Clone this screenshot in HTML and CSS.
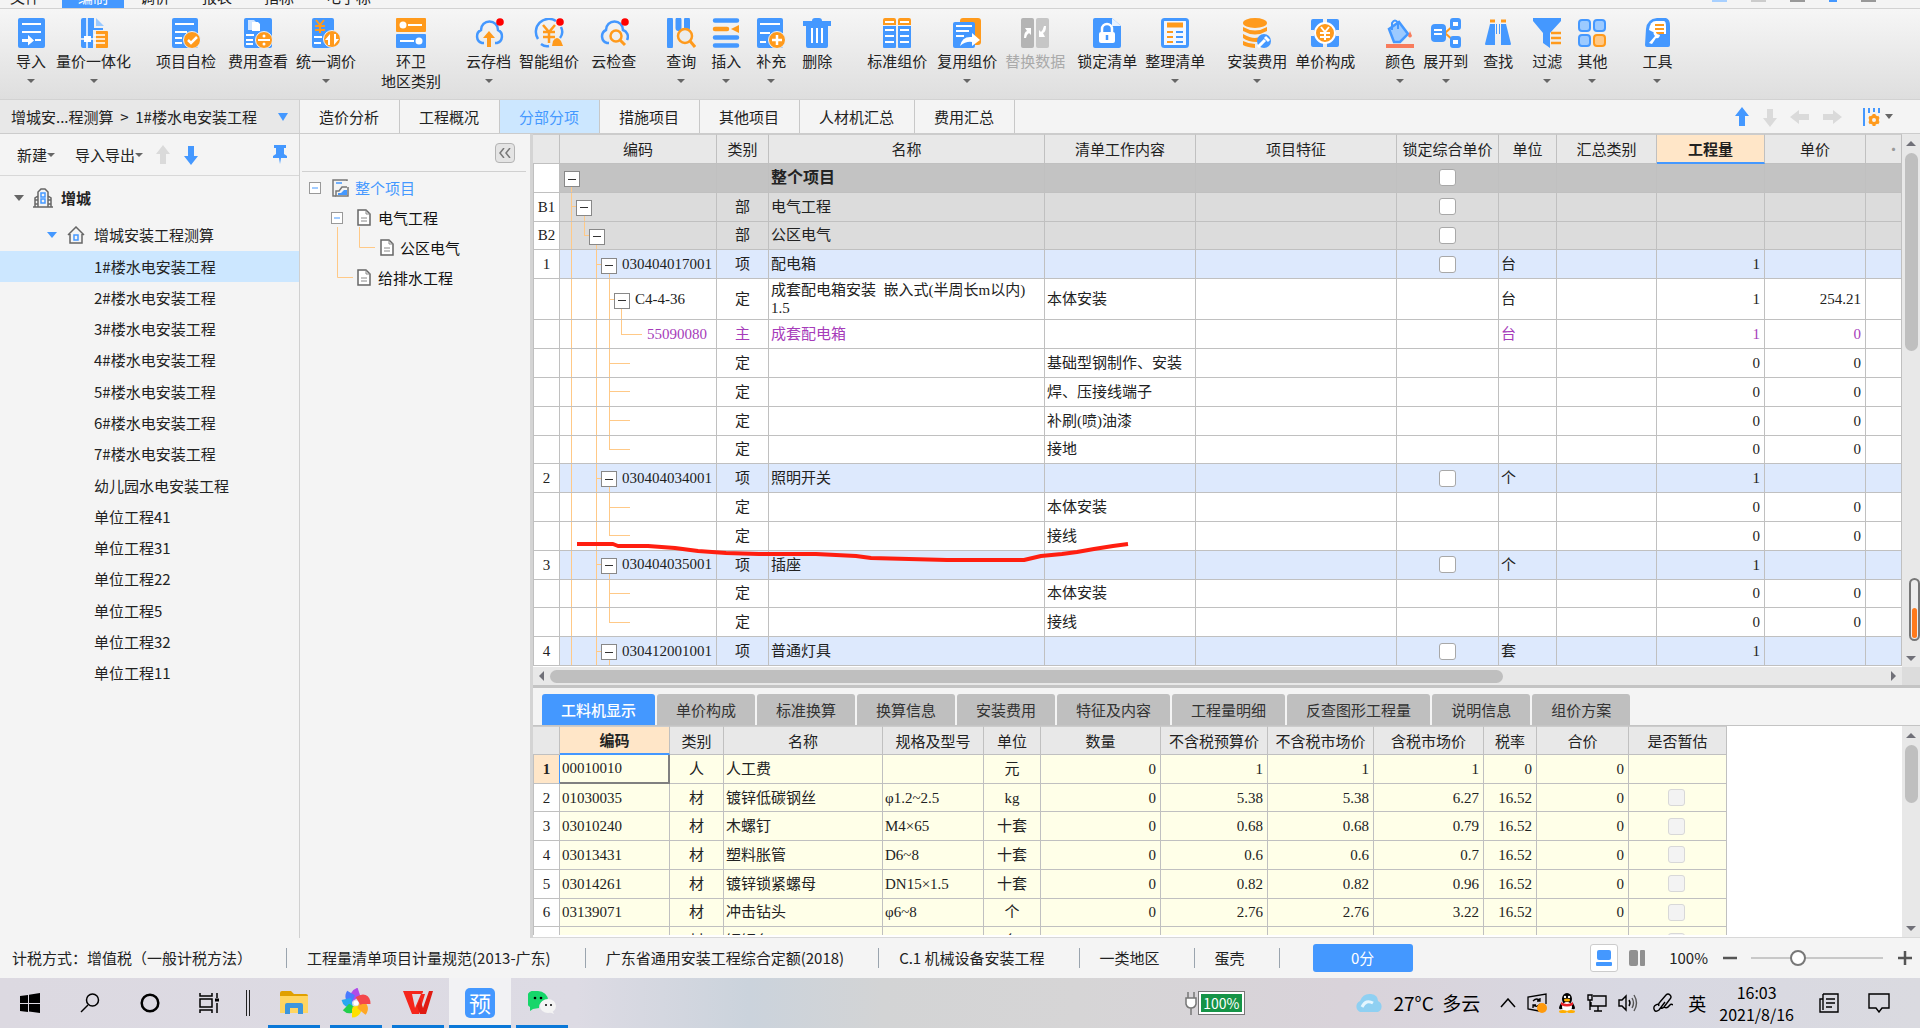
FILE: index.html
```html
<!DOCTYPE html>
<html lang="zh-CN">
<head>
<meta charset="utf-8">
<title>增城安装工程测算</title>
<link rel="stylesheet" href="styles.css">
</head>
<body>
<nav class="menu">
  <a href="#" class="first">文件</a><a href="#" class="active">编制</a><a href="#">调价</a><a href="#">报表</a><a href="#">指标</a><a href="#">电子标</a>
  <span class="menu-right"><i class="c1"></i><i class="c2"></i><i class="c3"></i><i class="c4"></i><i class="c3"></i></span>
</nav>

<div class="toolbar">
  <button class="tool s16"><svg viewBox="0 0 30 30"><rect x="2" width="27" height="30" rx="2" fill="#4498ff"/><path d="M6 6h19M6 14h19M19 22h6" stroke="#fff" stroke-width="2"/><path d="M6 21h6v-4l6 5.500-6 5v-3.500H6z" fill="#fff"/></svg><span>导入</span><b class="caret"></b></button>
  <button class="tool s10"><svg viewBox="0 0 30 30"><path d="M2 2q0-2 2-2h11v10h9v2H14v18H4q-2 0-2-2z" fill="#4498ff"/><path d="M17 0l8 8h-8z" fill="#9ccaff"/><path d="M8 0v30M2 21h13" stroke="#fff" stroke-width="1.500"/><rect x="5" y="18" width="7" height="6" fill="#fff"/><path d="M17 13h11q1 0 1 1v15q0 1-1 1H17z" fill="#ff9a1c"/><path d="M15 17h11M15 21h11M15 25h11" stroke="#fff" stroke-width="1.500"/></svg><span>量价一体化</span><b class="caret"></b></button>
  <button class="tool s25"><svg viewBox="0 0 30 30"><rect x="1" width="26" height="30" rx="2" fill="#4498ff"/><path d="M4 6h19M4 14h12M4 20h7M4 25h7" stroke="#fff" stroke-width="2"/><circle cx="21" cy="22" r="8.500" fill="#ff9a1c" stroke="#e8f2ff"/><path d="M17 22l3 3 6-6" stroke="#fff" stroke-width="2.500" fill="none"/></svg><span>项目自检</span></button>
  <button class="tool s12"><svg viewBox="0 0 30 30"><rect x="1" width="28" height="30" rx="2" fill="#4498ff"/><path d="M5 2h6l2 2v8H5z" fill="#cfe4ff"/><path d="M9 4h6l2 2v7H9z" fill="#fff"/><path d="M3 17h8M3 22h7M3 26h7" stroke="#fff" stroke-width="2"/><circle cx="21" cy="22" r="8.500" fill="#ff9a1c" stroke="#e8f2ff"/><path d="M15 22h12" stroke="#fff" stroke-width="2"/><circle cx="21" cy="18" r="1.500" fill="#fff"/><circle cx="21" cy="26" r="1.500" fill="#fff"/></svg><span>费用查看</span></button>
  <button class="tool s8"><svg viewBox="0 0 30 30"><rect x="1" width="22" height="30" rx="2" fill="#4498ff"/><path d="M5 2l4 5 4-5M9 7v8M4 8h10M4 12h10" stroke="#ff9a1c" stroke-width="2" fill="none"/><path d="M3 19h8M3 25h7" stroke="#fff" stroke-width="2"/><circle cx="21" cy="21" r="8.500" fill="#ff9a1c" stroke="#e8f2ff"/><path d="M19 27V16l-5 6h3v5zM23 16v11l5-6h-3v-5z" fill="#fff"/></svg><span>统一调价</span><b class="caret"></b></button>
  <button class="tool s25"><svg viewBox="0 0 30 30"><rect width="30" height="14" rx="1" fill="#ff9a1c"/><rect y="16" width="30" height="14" rx="1" fill="#4498ff"/><circle cx="7" cy="7" r="3.500" fill="#fff"/><circle cx="23" cy="23" r="3.500" fill="#fff"/><path d="M12 7h14M4 23h14" stroke="#fff" stroke-width="2"/></svg><span>环卫</span><span>地区类别</span></button>
  <button class="tool s25"><svg viewBox="0 0 30 30"><path d="M10 25H8a7 7 0 0 1-1-13 8.500 8.500 0 0 1 17 0 7 7 0 0 1-1 13h-2" fill="none" stroke="#4498ff" stroke-width="2.500"/><path d="M15 13l6 7h-4v9h-4v-9H9z" fill="#ff9a1c"/><circle cx="26" cy="4" r="3.800" fill="#f00"/></svg><span>云存档</span><b class="caret"></b></button>
  <button class="tool s8"><svg viewBox="0 0 30 30"><path d="M22 3A13 13 0 0 0 4 21M7 26q4 3 8 2M27 9q3 6-1 11" fill="none" stroke="#4498ff" stroke-width="2.500"/><path d="M9 7l6 7 6-7M15 14v11M9 14h12M9 19h12" stroke="#ff9a1c" stroke-width="2.500" fill="none"/><path d="M18 28l1-5q4-6 8 0l2 5z" fill="#ff9a1c"/><circle cx="26" cy="4" r="3.800" fill="#f00"/></svg><span>智能组价</span></button>
  <button class="tool s12"><svg viewBox="0 0 30 30"><path d="M10 25H8a7 7 0 0 1-1-13 8.500 8.500 0 0 1 17 0 7 7 0 0 1 4 10" fill="none" stroke="#4498ff" stroke-width="2.500"/><circle cx="17" cy="18" r="5.500" fill="none" stroke="#ff9a1c" stroke-width="2.500"/><path d="M21 22l5 5" stroke="#ff9a1c" stroke-width="3"/><circle cx="26" cy="4" r="3.800" fill="#f00"/></svg><span>云检查</span></button>
  <button class="tool s30"><svg viewBox="0 0 30 30"><path d="M4 2v26M12.500 2v8M21 2v8M4 2v26" stroke="#4498ff" stroke-width="6" stroke-linecap="round"/><circle cx="19" cy="18" r="7" fill="#ececec" stroke="#ff9a1c" stroke-width="2.500"/><path d="M24 23l5 6" stroke="#ff9a1c" stroke-width="3"/></svg><span>查询</span><b class="caret"></b></button>
  <button class="tool s15"><svg viewBox="0 0 30 30"><path d="M4 2.500h22M4 19.500h22M4 27.500h22" stroke="#4498ff" stroke-width="4.500" stroke-linecap="round"/><path d="M4 11h12" stroke="#ff9a1c" stroke-width="4.500" stroke-linecap="round"/><path d="M28 7v8l-8-4z" fill="#ff9a1c"/></svg><span>插入</span><b class="caret"></b></button>
  <button class="tool s15"><svg viewBox="0 0 30 30"><rect x="1" width="26" height="30" rx="2" fill="#4498ff"/><path d="M4 6h20M4 15h10M4 24h6" stroke="#fff" stroke-width="2"/><circle cx="21" cy="22" r="8.500" fill="#ff9a1c" stroke="#e8f2ff"/><path d="M16 22h10M21 17v10" stroke="#fff" stroke-width="2.500"/></svg><span>补充</span><b class="caret"></b></button>
  <button class="tool s16"><svg viewBox="0 0 30 30"><path d="M1 3h9q0-3 3-3h4q3 0 3 3h9v5h-3v20q0 2-2 2H6q-2 0-2-2V8H1z" fill="#4498ff"/><path d="M10 10v15M15 10v15M20 10v15" stroke="#fff" stroke-width="2"/></svg><span>删除</span></button>
  <button class="tool s35"><svg viewBox="0 0 30 30"><path d="M1 8h13v21q0 1-1 1H2q-1 0-1-1zM16 8h13v21q0 1-1 1H17q-1 0-1-1z" fill="#4498ff"/><path d="M1 7V2q0-2 2-2h9q2 0 2 2v5zM16 7V2q0-2 2-2h9q2 0 2 2v5z" fill="#ff9a1c"/><path d="M3 4h9M18 4h9M3 12h9M18 12h9M3 18h9M18 18h9M3 24h9M18 24h9" stroke="#fff" stroke-width="2"/></svg><span>标准组价</span></button>
  <button class="tool s10"><svg viewBox="0 0 30 30"><rect x="8" width="21" height="27" rx="3" fill="#ff9a1c"/><rect x="1" y="4" width="22" height="26" rx="2" fill="#4498ff"/><path d="M4 8h16M4 13h13M4 18h8" stroke="#fff" stroke-width="2"/><path d="M8 28q2-10 12-9v-4l8 7-8 6v-4q-6-1-12 4z" fill="#fff"/></svg><span>复用组价</span><b class="caret"></b></button>
  <button class="tool s8" disabled><svg viewBox="0 0 30 30"><rect x="1" width="13" height="30" rx="2" fill="#b4b4b4"/><rect x="16" width="13" height="30" rx="2" fill="#c6c6c6"/><path d="M4 20q0-6 3-7l-2-3h6v7l-2-2q-3 2-3 5zM26 8q0 6-3 7l2 4h-6v-7l2 2q2-2 3-6z" fill="#fff"/></svg><span>替换数据</span></button>
  <button class="tool s12"><svg viewBox="0 0 30 30"><path d="M3 0h17l9 8v20q0 2-2 2H3q-2 0-2-2V2q0-2 2-2z" fill="#4498ff"/><path d="M20 0l9 8h-9z" fill="#e8f2ff"/><rect x="7" y="14" width="16" height="11" rx="2" fill="#fff"/><path d="M10 15v-4a5 5 0 0 1 10 0v4" stroke="#fff" stroke-width="2.500" fill="none"/><path d="M15 17v5" stroke="#4498ff" stroke-width="2.500"/></svg><span>锁定清单</span></button>
  <button class="tool s8"><svg viewBox="0 0 30 30"><rect x="2.500" y="1.500" width="25" height="27" rx="2" fill="#f4f8ff" stroke="#4498ff" stroke-width="3"/><path d="M7 7h16" stroke="#ff9a1c" stroke-width="5"/><path d="M7 14h6M7 19h6M7 24h6" stroke="#ff9a1c" stroke-width="2"/><path d="M16 14h7M16 19h7M16 24h7" stroke="#4498ff" stroke-width="2"/></svg><span>整理清单</span><b class="caret"></b></button>
  <button class="tool s22"><svg viewBox="0 0 30 30"><ellipse cx="13" cy="5" rx="12" ry="5" fill="#ff9a1c"/><path d="M1 9q12 7 24 0v4q-12 7-24 0zM1 16q12 7 18 2l-4 6q-9 0-14-4zM1 23q6 3 12 3v4Q4 29 1 27z" fill="#ff9a1c"/><circle cx="22" cy="23" r="7" fill="#4498ff"/><path d="M16 29l7-7m0-3l4 4" stroke="#fff" stroke-width="3"/></svg><span>安装费用</span><b class="caret"></b></button>
  <button class="tool s8"><svg viewBox="0 0 30 30"><path d="M3 1h10v28H3q-2 0-2-2V18h3v-6H1V3q0-2 2-2zM17 1h10q2 0 2 2v9h-3v6h3v9q0 2-2 2H17z" fill="#4498ff"/><circle cx="15" cy="15" r="10" fill="#ff9a1c" stroke="#fff" stroke-width="2"/><path d="M11 9l4 5 4-5M15 14v8M10 15h10M10 19h10" stroke="#fff" stroke-width="2" fill="none"/></svg><span>单价构成</span></button>
  <button class="tool s30"><svg viewBox="0 0 30 30"><path d="M4 11L14 4l9 12-8 8H9z" fill="#9ccaff" stroke="#4498ff" stroke-width="2.500"/><path d="M7 12V5q3-5 6 0v6" fill="none" stroke="#4498ff" stroke-width="2"/><path d="M25 13l2 5q-2 3-4 0z" fill="#f87c5c"/><path d="M1 28h28" stroke="#f87c5c" stroke-width="4"/></svg><span>颜色</span><b class="caret"></b></button>
  <button class="tool s8"><svg viewBox="0 0 30 30"><path d="M14 15L24 6M14 15l10 9" stroke="#ff9a1c" stroke-width="2"/><rect y="6" width="15" height="18" rx="4" fill="#4498ff"/><rect x="19" width="11" height="12" rx="3" fill="#4498ff"/><rect x="19" y="18" width="11" height="12" rx="3" fill="#4498ff"/><path d="M3 12h8M3 16h8" stroke="#fff" stroke-width="2"/><path d="M22 6h5M22 24h5" stroke="#fff" stroke-width="4"/></svg><span>展开到</span><b class="caret"></b></button>
  <button class="tool s15"><svg viewBox="0 0 30 30"><path d="M7 6h5v21H3q-1 0-1-1zM18 6h5l5 20q0 1-1 1h-9zM13 6h1v10h-1zM16 6h1v10h-1z" fill="#4498ff"/><path d="M7 3h5M18 3h5" stroke="#ff9a1c" stroke-width="3"/></svg><span>查找</span></button>
  <button class="tool s19"><svg viewBox="0 0 30 30"><path d="M1 0h28v3L18 15v15l-7-5V15L1 3z" fill="#4498ff"/><path d="M19 15h10M19 20h10M19 25h10" stroke="#ff9a1c" stroke-width="2.500"/></svg><span>过滤</span><b class="caret"></b></button>
  <button class="tool s15"><svg viewBox="0 0 30 30"><g fill="#9ccaff" stroke="#4498ff" stroke-width="2"><rect x="2" y="2" width="11" height="11" rx="3"/><rect x="17" y="2" width="11" height="11" rx="3"/><rect x="2" y="17" width="11" height="11" rx="3"/></g><rect x="17" y="17" width="11" height="11" rx="3" fill="#ffc988" stroke="#ff9a1c" stroke-width="2"/></svg><span>其他</span><b class="caret"></b></button>
  <button class="tool s35"><svg viewBox="0 0 30 30"><path d="M4 11Q5 1 15 0h9q4 1 4 8v19q0 2-2 2H5q-2 0-2-2z" fill="#4498ff"/><path d="M7 12Q8 3 14 3h8q2 0 2 6v7H15z" fill="#fff"/><path d="M13 7h9M13 11h9M14 15h8" stroke="#ff9a1c" stroke-width="2"/><path d="M7 25l6-7q-3-3 0-5l2 3 3 1q-1 4-4 3l-4 6z" fill="#fff"/></svg><span>工具</span><b class="caret"></b></button>
</div>

<div class="navrow">
  <button class="crumb"><span>增城安...程测算&nbsp; &gt;&nbsp; 1#楼水电安装工程</span><b class="caret blue"></b></button>
  <div class="tabs"><button>造价分析</button><button>工程概况</button><button class="on">分部分项</button><button>措施项目</button><button>其他项目</button><button>人材机汇总</button><button>费用汇总</button></div>
  <div class="arrows">
    <button aria-label="上移"><svg width="16" height="20" viewBox="0 0 16 20"><path d="M8 0l7 9h-4v10H5V9H1z" fill="#4498ff"/></svg></button>
    <button aria-label="下移"><svg width="16" height="20" viewBox="0 0 16 20"><path d="M8 20l7-9h-4V2H5v9H1z" fill="#dadada"/></svg></button>
    <button aria-label="左移"><svg width="20" height="16" viewBox="0 0 20 16"><path d="M0 8l9-7v4h10v6H9v4z" fill="#dadada"/></svg></button>
    <button aria-label="右移"><svg width="20" height="16" viewBox="0 0 20 16"><path d="M20 8l-9-7v4H1v6h10v4z" fill="#dadada"/></svg></button>
    <button aria-label="列设置" class="cols"><svg width="18" height="20" viewBox="0 0 18 20"><path d="M2 1v18M7 1v5M12 1v4M17 1v5" stroke="#4498ff" stroke-width="2"/><circle cx="12" cy="13" r="3.500" fill="none" stroke="#ff9a1c" stroke-width="3"/><path d="M12 7v3M12 16v3M7 10l2 1M15 15l2 1M17 10l-2 1M9 15l-2 1" stroke="#ff9a1c" stroke-width="3"/></svg><b class="caret"></b></button>
  </div>
</div>

<main>
  <aside class="projects">
    <div class="ptools">
      <button>新建<b class="caret sm"></b></button><button>导入导出<b class="caret sm"></b></button>
      <button aria-label="上移"><svg width="16" height="20" viewBox="0 0 16 20"><path d="M8 0l7 9h-4v10H5V9H1z" fill="#dadada"/></svg></button>
      <button aria-label="下移"><svg width="16" height="20" viewBox="0 0 16 20"><path d="M8 20l7-9h-4V1H5v10H1z" fill="#4498ff"/></svg></button>
      <button class="pin" aria-label="固定"><svg width="16" height="20" viewBox="0 0 16 20"><path d="M2 0h12v3h-2v6l3 2v2H9l-1 6-1-6H1v-2l3-2V3H2z" fill="#4498ff"/></svg></button>
    </div>
    <div class="root"><b class="caret big"></b><svg width="20" height="20" viewBox="0 0 20 20" fill="none" stroke="#666" stroke-width="1.500"><path d="M0 19h20M5 19V4l3-3h4l3 3v15M5 8l-3 2v9M15 8l3 2v9M2 12h3M2 16h3M15 12h3M15 16h3"/><path d="M8 5h4v4H8zM8 11h4v4H8z" stroke="#4498ff"/></svg><b>增城</b></div>
    <div class="root sub"><b class="caret big blue"></b><svg width="18" height="18" viewBox="0 0 18 18" fill="none" stroke="#666" stroke-width="1.500"><path d="M1 9l8-8 8 8M3 8v9h12V8"/><path d="M7 9h4v5H7z" stroke="#4498ff"/></svg><span>增城安装工程测算</span></div>
    <ul><li class="on">1#楼水电安装工程</li><li>2#楼水电安装工程</li><li>3#楼水电安装工程</li><li>4#楼水电安装工程</li><li>5#楼水电安装工程</li><li>6#楼水电安装工程</li><li>7#楼水电安装工程</li><li>幼儿园水电安装工程</li><li>单位工程41</li><li>单位工程31</li><li>单位工程22</li><li>单位工程5</li><li>单位工程32</li><li>单位工程11</li></ul>
  </aside>

  <aside class="sections">
    <div class="shead"><button aria-label="收起"><svg width="12" height="10" viewBox="0 0 12 10" fill="none" stroke="#777" stroke-width="1.500"><path d="M5 0L1 5l4 5M11 0L7 5l4 5"/></svg></button></div>
    <div class="srow on"><svg width="48" height="30" viewBox="0 0 48 30" fill="none"><rect x="7.500" y="9.500" width="11" height="11" fill="#fff" stroke="#999"/><path d="M10 15h6" stroke="#4498ff"/><path d="M45 8V7H31v16h3" stroke="#777" stroke-width="1.500"/><path d="M45 14h-5l-3 4h-3v5h12v-9" stroke="#777" stroke-width="1.500"/><path d="M36 22v-2h3l3-3h3v5z" fill="#4498ff"/><path d="M34 10h6" stroke="#4498ff" stroke-width="1.500"/></svg>整个项目</div>
    <div class="srow"><svg width="71" height="30" viewBox="0 0 71 30" fill="none"><rect x="29.500" y="9.500" width="11" height="11" fill="#fff" stroke="#999"/><path d="M32 15h6" stroke="#4498ff"/><path d="M35.500 24v6M57.500 24v6" stroke="#ffc987"/><path d="M56 7h8l4 4v11H56z" fill="#fff" stroke="#666" stroke-width="1.500"/><path d="M64 7v4h4M59 15h6M59 18h6" stroke="#888"/></svg>电气工程</div>
    <div class="srow"><svg width="93" height="30" viewBox="0 0 93 30" fill="none"><path d="M35.500 0v30M57.500 0v14.500H73" stroke="#ffc987"/><path d="M79 7h8l4 4v11H79z" fill="#fff" stroke="#666" stroke-width="1.500"/><path d="M87 7v4h4M82 15h6M82 18h6" stroke="#888"/></svg>公区电气</div>
    <div class="srow"><svg width="71" height="30" viewBox="0 0 71 30" fill="none"><path d="M35.500 0v14.500H51" stroke="#ffc987"/><path d="M56 7h8l4 4v11H56z" fill="#fff" stroke="#666" stroke-width="1.500"/><path d="M64 7v4h4M59 15h6M59 18h6" stroke="#888"/></svg>给排水工程</div>
  </aside>

  <section class="work">
    <div class="pane top">
      <div class="view">
        <table class="grid bill">
          <colgroup><col class="w27"><col class="w157"><col class="w52"><col class="w276"><col class="w151"><col class="w201"><col class="w102"><col class="w58"><col class="w100"><col class="w108"><col class="w101"><col></colgroup>
          <thead><tr><th></th><th>编码</th><th>类别</th><th>名称</th><th>清单工作内容</th><th>项目特征</th><th>锁定综合单价</th><th>单位</th><th>汇总类别</th><th class="cur">工程量</th><th>单价</th><th class="more">·</th></tr></thead>
          <tbody>
          <tr class="all"><td></td><td class="t0"><button class="tg" aria-label="折叠"></button></td><td></td><td>整个项目</td><td></td><td></td><td><input type="checkbox" aria-label="锁定"></td><td></td><td></td><td></td><td></td><td></td></tr>
          <tr class="part"><td>B1</td><td class="t1"><button class="tg" aria-label="折叠"></button></td><td>部</td><td>电气工程</td><td></td><td></td><td><input type="checkbox" aria-label="锁定"></td><td></td><td></td><td></td><td></td><td></td></tr>
          <tr class="part"><td>B2</td><td class="t2"><button class="tg" aria-label="折叠"></button></td><td>部</td><td>公区电气</td><td></td><td></td><td><input type="checkbox" aria-label="锁定"></td><td></td><td></td><td></td><td></td><td></td></tr>
          <tr class="item"><td>1</td><td class="t3"><button class="tg" aria-label="折叠"></button>030404017001</td><td>项</td><td>配电箱</td><td></td><td></td><td><input type="checkbox" aria-label="锁定"></td><td>台</td><td></td><td>1</td><td></td><td></td></tr>
          <tr class="tall"><td></td><td class="t4"><button class="tg" aria-label="折叠"></button>C4-4-36</td><td>定</td><td>成套配电箱安装&nbsp; 嵌入式(半周长m以内)<br>1.5</td><td>本体安装</td><td></td><td></td><td>台</td><td></td><td>1</td><td>254.21</td><td></td></tr>
          <tr class="main"><td></td><td class="t5">55090080</td><td>主</td><td>成套配电箱</td><td></td><td></td><td></td><td>台</td><td></td><td>1</td><td>0</td><td></td></tr>
          <tr><td></td><td class="t6"></td><td>定</td><td></td><td>基础型钢制作、安装</td><td></td><td></td><td></td><td></td><td>0</td><td>0</td><td></td></tr>
          <tr><td></td><td class="t6"></td><td>定</td><td></td><td>焊、压接线端子</td><td></td><td></td><td></td><td></td><td>0</td><td>0</td><td></td></tr>
          <tr><td></td><td class="t6"></td><td>定</td><td></td><td>补刷(喷)油漆</td><td></td><td></td><td></td><td></td><td>0</td><td>0</td><td></td></tr>
          <tr><td></td><td class="t7"></td><td>定</td><td></td><td>接地</td><td></td><td></td><td></td><td></td><td>0</td><td>0</td><td></td></tr>
          <tr class="item"><td>2</td><td class="t3"><button class="tg" aria-label="折叠"></button>030404034001</td><td>项</td><td>照明开关</td><td></td><td></td><td><input type="checkbox" aria-label="锁定"></td><td>个</td><td></td><td>1</td><td></td><td></td></tr>
          <tr><td></td><td class="t6"></td><td>定</td><td></td><td>本体安装</td><td></td><td></td><td></td><td></td><td>0</td><td>0</td><td></td></tr>
          <tr><td></td><td class="t7"></td><td>定</td><td></td><td>接线</td><td></td><td></td><td></td><td></td><td>0</td><td>0</td><td></td></tr>
          <tr class="item"><td>3</td><td class="t3"><button class="tg" aria-label="折叠"></button>030404035001</td><td>项</td><td>插座</td><td></td><td></td><td><input type="checkbox" aria-label="锁定"></td><td>个</td><td></td><td>1</td><td></td><td></td></tr>
          <tr><td></td><td class="t6"></td><td>定</td><td></td><td>本体安装</td><td></td><td></td><td></td><td></td><td>0</td><td>0</td><td></td></tr>
          <tr><td></td><td class="t7"></td><td>定</td><td></td><td>接线</td><td></td><td></td><td></td><td></td><td>0</td><td>0</td><td></td></tr>
          <tr class="item"><td>4</td><td class="t3"><button class="tg" aria-label="折叠"></button>030412001001</td><td>项</td><td>普通灯具</td><td></td><td></td><td><input type="checkbox" aria-label="锁定"></td><td>套</td><td></td><td>1</td><td></td><td></td></tr>
          </tbody>
        </table>
        <svg class="mark" width="600" height="440" viewBox="0 0 600 440"><path d="M44 410H80L85 412H115L142 414 165 417 193 419 226 420H283L323 422 338 424 414 426H491L508 422 529 420 544 418 561 415 580 412 595 410" fill="none" stroke="#ff1e10" stroke-width="4" stroke-linejoin="round"/></svg>
      </div>
      <div class="vbar"><b class="up"></b><i class="thumb long"></i><b class="down"></b></div>
      <div class="hbar"><b class="left"></b><i class="thumb"></i><b class="right"></b></div>
      <div class="corner"></div>
      <div class="gauge"><i></i></div>
    </div>

    <div class="pane bottom">
      <div class="dtabs"><button class="on">工料机显示</button><button>单价构成</button><button>标准换算</button><button>换算信息</button><button>安装费用</button><button>特征及内容</button><button>工程量明细</button><button>反查图形工程量</button><button>说明信息</button><button>组价方案</button></div>
      <div class="detail">
        <div class="view">
        <table class="grid mats">
          <colgroup><col class="w27"><col class="w110"><col class="w54"><col class="w159"><col class="w101"><col class="w57"><col class="w120"><col class="w107"><col class="w106"><col class="w110"><col class="w53"><col class="w92"><col class="w98"></colgroup>
          <thead><tr><th></th><th class="cur">编码</th><th>类别</th><th>名称</th><th>规格及型号</th><th>单位</th><th>数量</th><th>不含税预算价</th><th>不含税市场价</th><th>含税市场价</th><th>税率</th><th>合价</th><th>是否暂估</th></tr></thead>
          <tbody>
          <tr class="sel"><td>1</td><td>00010010</td><td>人</td><td>人工费</td><td></td><td>元</td><td>0</td><td>1</td><td>1</td><td>1</td><td>0</td><td>0</td><td></td></tr>
          <tr><td>2</td><td>01030035</td><td>材</td><td>镀锌低碳钢丝</td><td>φ1.2~2.5</td><td>kg</td><td>0</td><td>5.38</td><td>5.38</td><td>6.27</td><td>16.52</td><td>0</td><td><input type="checkbox" disabled aria-label="暂估"></td></tr>
          <tr><td>3</td><td>03010240</td><td>材</td><td>木螺钉</td><td>M4×65</td><td>十套</td><td>0</td><td>0.68</td><td>0.68</td><td>0.79</td><td>16.52</td><td>0</td><td><input type="checkbox" disabled aria-label="暂估"></td></tr>
          <tr><td>4</td><td>03013431</td><td>材</td><td>塑料胀管</td><td>D6~8</td><td>十套</td><td>0</td><td>0.6</td><td>0.6</td><td>0.7</td><td>16.52</td><td>0</td><td><input type="checkbox" disabled aria-label="暂估"></td></tr>
          <tr><td>5</td><td>03014261</td><td>材</td><td>镀锌锁紧螺母</td><td>DN15×1.5</td><td>十套</td><td>0</td><td>0.82</td><td>0.82</td><td>0.96</td><td>16.52</td><td>0</td><td><input type="checkbox" disabled aria-label="暂估"></td></tr>
          <tr><td>6</td><td>03139071</td><td>材</td><td>冲击钻头</td><td>φ6~8</td><td>个</td><td>0</td><td>2.76</td><td>2.76</td><td>3.22</td><td>16.52</td><td>0</td><td><input type="checkbox" disabled aria-label="暂估"></td></tr>
          <tr><td></td><td></td><td>材</td><td>钢锯条</td><td></td><td>条</td><td></td><td></td><td></td><td></td><td></td><td></td><td><input type="checkbox" disabled aria-label="暂估"></td></tr>
          </tbody>
        </table>
        </div>
        <div class="vbar"><b class="up"></b><i class="thumb short"></i><b class="down"></b></div>
      </div>
    </div>
  </section>
</main>

<footer class="status">
  <span>计税方式：增值税（一般计税方法）</span><span>工程量清单项目计量规范(2013-广东)</span><span>广东省通用安装工程综合定额(2018)</span><span>C.1 机械设备安装工程</span><span>一类地区</span><span>蛋壳</span>
  <button class="score">0分</button>
  <div class="zoom">
    <button class="vw on" aria-label="上下布局"><svg width="16" height="16" viewBox="0 0 16 16" fill="#4498ff"><rect x="1" width="14" height="10" rx="2"/><rect y="12" width="16" height="4" rx="1"/></svg></button>
    <button class="vw" aria-label="左右布局"><svg width="16" height="16" viewBox="0 0 16 16"><rect width="9" height="16" rx="2" fill="#909090"/><rect x="11" width="5" height="16" rx="1" fill="#909090"/></svg></button>
    <label for="zoom">100%</label>
    <button class="pm" aria-label="缩小"><svg width="16" height="16"><path d="M1 8h14" stroke="#555" stroke-width="2.500"/></svg></button>
    <input id="zoom" type="range" min="0" max="100" value="34">
    <button class="pm" aria-label="放大"><svg width="16" height="16"><path d="M1 8h14M8 1v14" stroke="#555" stroke-width="2.500"/></svg></button>
  </div>
</footer>

<div class="taskbar">
  <div class="sys">
    <button aria-label="开始"><svg width="20" height="20" viewBox="0 0 20 20"><path d="M0 3l8-1v8H0zM9 1.800L20 0v10H9zM0 11h8v8l-8-1zM9 11h11v9L9 18.500z"/></svg></button>
    <button aria-label="搜索"><svg width="20" height="20" viewBox="0 0 20 20" fill="none" stroke="#000" stroke-width="1.500"><circle cx="12.500" cy="7" r="6"/><path d="M8 12l-7 7"/></svg></button>
    <button aria-label="助手"><svg width="20" height="20" viewBox="0 0 20 20"><circle cx="10" cy="10" r="8.300" fill="none" stroke="#000" stroke-width="2.500"/></svg></button>
    <button aria-label="任务视图"><svg width="22" height="20" viewBox="0 0 22 20" fill="none" stroke="#000" stroke-width="1.500"><path d="M1 0v3h12V0M1 6h12v8H1zM1 20v-3h12v3M18 0v5M18 10v10"/><path d="M16 7h4" stroke-width="3"/></svg></button>
  </div>
  <i class="split"></i>
  <div class="apps">
    <button aria-label="文件夹"><svg width="28" height="24" viewBox="0 0 28 24"><path d="M0 2q0-2 2-2h9l3 3h12q2 0 2 2v4H0z" fill="#e0a000"/><path d="M0 5h28v17H0z" fill="#ffd561"/><path d="M5 23v-9q0-2 2-2h14q2 0 2 2v9h-5v-6h-8v6z" fill="#3d96dd"/></svg></button>
    <button aria-label="浏览器"><svg width="30" height="30" viewBox="0 0 30 30" fill="none" stroke-width="9"><path d="M15 11Q12 6 18 4" stroke="#b04be8"/><path d="M12 12Q7 10 10 5" stroke="#4a7bff"/><path d="M11 15Q6 16 5 11" stroke="#28a8f0"/><path d="M12 18Q9 23 5 19" stroke="#22cf4c"/><path d="M16 18Q17 25 11 25" stroke="#ffe000"/><path d="M18 16q7 3 3 8" stroke="#ffa726"/><path d="M17 13q8-5 8 3" stroke="#f4484c"/><circle cx="15" cy="15" r="2.500" fill="#fff" stroke="none"/></svg></button>
    <button aria-label="文字处理"><svg width="30" height="24" viewBox="0 0 30 24"><path d="M0 0h20q0 3-2 3H9l3 14 6-14h4l-6 20h-7z" fill="#f5261c"/><path d="M17 8l3 9L26 0h4l-7 23h-6l-3-8z" fill="#e01b12"/></svg></button>
    <button class="on"><span class="yu">预</span></button>
    <button aria-label="微信"><svg width="28" height="24" viewBox="0 0 28 24"><path d="M10 0a10 9 0 0 1 10 9q-9 0-9 8l-6 1-3 2v-4A9 9 0 0 1 10 0z" fill="#16d66a"/><ellipse cx="20" cy="15" rx="8" ry="7" fill="#f4f4f4"/><path d="M24 19l2 4-5-2z" fill="#f4f4f4"/><circle cx="7" cy="7" r="1.300"/><circle cx="13" cy="7" r="1.300"/><circle cx="18" cy="14" r="1"/><circle cx="23" cy="14" r="1"/></svg></button>
  </div>
  <div class="power"><svg width="14" height="24" viewBox="0 0 14 24"><path d="M4 1v6M10 1v6M2 7h10v6q-1 4-5 4t-5-4zM7 17v7" fill="#fff" stroke="#777" stroke-width="1.500"/></svg><span>100%</span></div>
  <div class="tray">
    <svg class="cloud" width="28" height="20" viewBox="0 0 28 20"><path d="M5 19a6 6 0 0 1 0-11Q8 0 16 1q7 1 7 7a6 6 0 0 1 0 11z" fill="#8fd0f2"/><path d="M7 14q4-8 11-4" stroke="#e4f6ff" stroke-width="3" fill="none"/></svg>
    <span class="temp">27°C&nbsp; 多云</span>
    <svg width="16" height="10" viewBox="0 0 16 10" fill="none" stroke="#000" stroke-width="1.500"><path d="M1 9l7-8 7 8"/></svg>
    <svg width="20" height="20" viewBox="0 0 20 20" fill="none" stroke="#000" stroke-width="1.300"><path d="M12 18L1 16V4l18-3v10"/><path d="M6 8q4-4 7 0M13 5v3h-3M13 11q-3 4-7 1M6 15v-3h3"/><circle cx="15" cy="15" r="5" fill="#ff9a0c" stroke="none"/></svg>
    <svg width="18" height="20" viewBox="0 0 18 20"><ellipse cx="9" cy="6" rx="5" ry="6"/><path d="M3 10q-4 7 0 6h12q4 1 0-6z"/><ellipse cx="9" cy="14" rx="5" ry="5" fill="#fff"/><path d="M3 9q6 4 12 0v3q-6 3-12 0z" fill="#e8222a"/><ellipse cx="9" cy="7" rx="3" ry="1.500" fill="#ffae00"/><ellipse cx="5" cy="18.500" rx="4" ry="1.500" fill="#ffae00"/><ellipse cx="13" cy="18.500" rx="4" ry="1.500" fill="#ffae00"/><circle cx="7" cy="4" r="1.200" fill="#fff"/><circle cx="11" cy="4" r="1.200" fill="#fff"/></svg>
    <svg width="20" height="18" viewBox="0 0 20 18" fill="none" stroke="#000" stroke-width="1.400"><path d="M6 2h13v10H4V8M11 12v5M7 17h8M1 1h4v5H1zM3 6v10"/></svg>
    <svg width="20" height="18" viewBox="0 0 20 18" fill="none" stroke="#000" stroke-width="1.400"><path d="M1 6h3l4-4v14l-4-4H1zM11 6q2 3 0 6"/><path d="M14 4q3 5 0 10M16 1q5 8 0 16" stroke="#555"/></svg>
    <svg class="pen" width="20" height="20" viewBox="0 0 20 20" fill="none" stroke="#000" stroke-width="1.400"><path d="M6 13q-1-2 1-4l6-7q2-2 4 0t0 4l-6 8q-2 2-4 1M6 11q-6 1-5 5t5 1l6-8M11 14q3 2 5-1t4-1"/></svg>
    <span class="ime">英</span>
    <div class="clock"><span>16:03</span><span>2021/8/16</span></div>
    <svg width="20" height="20" viewBox="0 0 20 20" fill="none" stroke="#000" stroke-width="1.400"><path d="M4 1h15v18H1V6h3M4 1v16M7 6h9M7 10h9M7 14h6"/></svg>
    <svg class="chat" width="22" height="20" viewBox="0 0 22 20" fill="none" stroke="#000" stroke-width="1.400"><path d="M1 1h20v14h-7l-3 4-3-4H1z"/></svg>
  </div>
</div>
</body>
</html>
```
FILE: styles.css
```css
* { box-sizing: border-box; }
body {
  margin: 0;
  height: 100vh;
  display: flex;
  flex-direction: column;
  overflow: hidden;
  background: #f4f4f4;
  color: #222;
  font: 15px/20px "Noto Sans CJK SC", sans-serif;
}
button { border: 0; padding: 0; margin: 0; background: none; color: inherit; font: inherit; }
svg { display: block; flex: none; }
i { font-style: normal; }

.caret { width: 0; height: 0; border: 5px solid transparent; border-top-color: #666; border-bottom: 0; }
.caret.blue { border-top-color: #4498ff; }
.caret.sm { border-width: 4px; border-bottom: 0; }

/* menu strip */
.menu { display: flex; align-items: flex-end; flex: none; height: 8px; overflow: hidden; }
.menu a { padding: 0 16px; color: #222; text-decoration: none; line-height: 22px; }
.menu .first { padding: 0 16px 0 10px; margin-right: 6px; }
.menu .active { background: #4498ff; color: #fff; }
.menu-right { display: flex; gap: 24px; margin-left: auto; margin-right: 44px; align-self: flex-start; }
.menu-right i { width: 15px; height: 2px; background: #999; }
.menu-right .c1 { background: #a8d0ff; }
.menu-right .c2 { background: #ccc; }
.menu-right .c4 { width: 8px; background: #4498ff; }

/* main toolbar */
.toolbar { display: flex; flex: none; height: 92px; border-top: 1px solid #d2d2d2; border-bottom: 1px solid #d2d2d2; background: linear-gradient(#f6f6f6, #dedede); }
.tool { display: flex; flex-direction: column; align-items: center; flex: none; padding-top: 9px; }
.tool svg { width: 30px; height: 30px; margin-bottom: 3px; }
.tool .caret { margin-top: 8px; border-width: 4px; border-bottom: 0; }
.tool:disabled { color: #aaa; }
.s8 { margin-left: 8px; }
.s10 { margin-left: 10px; }
.s12 { margin-left: 12px; }
.s15 { margin-left: 15px; }
.s16 { margin-left: 16px; }
.s19 { margin-left: 19px; }
.s22 { margin-left: 22px; }
.s25 { margin-left: 25px; }
.s30 { margin-left: 30px; }
.s35 { margin-left: 35px; }

/* breadcrumb and page tabs */
.navrow { display: flex; flex: none; height: 34px; border-bottom: 1px solid #ccc; }
.crumb { display: flex; align-items: center; justify-content: space-between; width: 300px; padding: 0 11px; background: #e8e8e8; border-right: 1px solid #d0d0d0; }
.crumb .caret { border-width: 8px 5px 0; }
.tabs { display: flex; }
.tabs button { padding: 0 20px 0 19px; border-right: 1px solid #c8c8c8; }
.tabs .on { background: #cce7ff; color: #4498ff; }
.arrows { display: flex; align-items: center; gap: 12px; margin-left: auto; padding-right: 27px; }
.cols { display: flex; align-items: center; gap: 5px; margin-left: 8px; }
.cols .caret { border-width: 5px 4px 0; }

main { display: flex; flex: 1; min-height: 0; }

/* project list */
.projects { flex: none; width: 300px; border-right: 1px solid #d0d0d0; }
.ptools { display: flex; align-items: center; height: 42px; padding: 0 11px 0 17px; border-bottom: 1px solid #d8d8d8; }
.ptools button { display: flex; align-items: center; margin-right: 12px; }
.ptools button:first-child { margin-right: 20px; }
.ptools .pin { margin: 0 0 0 auto; }
.root { display: flex; align-items: center; height: 43px; padding-left: 14px; }
.root svg { margin: 0 8px 0 9px; }
.root.sub { height: 32px; padding-left: 47px; }
.root.sub svg { margin-left: 10px; margin-right: 9px; }
.caret.big { border-width: 6px 5px 0; }
.projects ul { display: grid; grid-auto-rows: 1fr; height: 438px; margin: 0; padding: 0; list-style: none; }
.projects li { display: flex; align-items: center; padding-left: 94px; }
.projects .on { background: #cce7ff; }

/* section tree */
.sections { flex: none; width: 233px; border-right: 3px solid #d4d4d4; }
.shead { display: flex; justify-content: flex-end; height: 38px; margin: 0 4px 1px 2px; padding: 9px 11px; border-bottom: 1px solid #d0d0d0; }
.shead button { display: flex; align-items: center; justify-content: center; width: 20px; height: 20px; border: 1px solid #b4b4b4; border-radius: 4px; background: #e4e4e4; }
.srow { display: flex; align-items: center; height: 30px; padding-left: 2px; color: #111; }
.srow svg { margin-right: 5px; }
.srow.on { color: #4498ff; }

/* work area */
.work { display: flex; flex-direction: column; flex: 1; min-width: 0; }
.pane.top { position: relative; display: grid; grid-template: 1fr 18px / 1fr 18px; flex: 1; min-height: 0; border-bottom: 3px solid #c4c4c4; }
.view { position: relative; overflow: hidden; background: #fff; }
.mark { position: absolute; left: 0; top: 0; }
.vbar, .hbar { display: flex; align-items: center; background: #e8e8e8; }
.vbar { flex-direction: column; padding: 7px 0 6px; }
.hbar { padding: 0 6px; }
.thumb { background: #bfbfbf; border-radius: 7px; }
.hbar .thumb { width: 953px; height: 13px; margin-left: 6px; }
.vbar .thumb { width: 13px; margin-top: 7px; }
.long { height: 198px; }
.short { height: 58px; }
.corner { background: #dcdcdc; }
.up, .down { border: 5px solid transparent; }
.up { border-top: 0; border-bottom-color: #707078; }
.down { margin-top: auto; border-bottom: 0; border-top-color: #707078; }
.left, .right { border: 5px solid transparent; }
.left { border-left: 0; border-right-color: #707078; }
.right { margin-left: auto; border-right: 0; border-left-color: #707078; }
.gauge { position: absolute; right: 0; bottom: 44px; display: flex; align-items: flex-end; width: 11px; height: 63px; padding: 1px; border: 2px solid #777; border-radius: 6px; background: #eee; }
.gauge i { flex: 1; height: 30px; border-radius: 3px; background: #ff7a1c; }

/* data grids */
.grid { table-layout: fixed; border-collapse: separate; border-spacing: 0; font: 15px/18px "Liberation Serif", "Noto Sans CJK SC", serif; color: #222; }
.bill { width: 100%; height: 532px; }
.mats { width: 1194px; height: 230px; }
.grid th, .grid td { height: 28px; padding: 0 2px; border-right: 1px solid #c0c0c0; border-bottom: 1px solid #c0c0c0; font-weight: 400; text-align: left; white-space: nowrap; overflow: hidden; }
.grid th { height: 29px; background: #e8e8e8; text-align: center; border-top: 1px solid #ccc; font-family: "Noto Sans CJK SC", sans-serif; }
.bill th { height: 30px; }
.grid th.cur { background: #ffe6c8; font-weight: 700; border-bottom: 2px solid #4498ff; }
.grid .more { text-align: right; padding: 0; color: #999; }
.grid td:first-child { background: #fff; text-align: center; border-left: 1px solid #c0c0c0; padding: 0; }
.grid td:nth-child(3) { text-align: center; }
.bill td:nth-child(7) { text-align: center; }
.bill td:nth-child(10), .bill td:nth-child(11) { text-align: right; padding-right: 4px; }
.bill tr { background-color: #fff; }
.bill .all { background-color: #c3c3c3; font-size: 16px; font-weight: 700; }
.bill .all td { font-weight: 700; }
.bill .part { background-color: #dcdcdc; }
.bill .item { background-color: #dde9fd; }
.bill .main { color: #a63cba; }
.bill .tall td { height: 40px; }
.grid input { appearance: none; display: block; width: 17px; height: 17px; margin: 0 auto; border: 1px solid #a8a8a8; border-radius: 3px; background: #fff; }
.grid input:disabled { border-color: #d8d8d8; background: #f3f3f3; }
.tg { display: inline-block; vertical-align: middle; width: 16px; height: 16px; margin-right: 5px; border: 1px solid #888; background: linear-gradient(#333, #333) center / 8px 1px no-repeat #fff; }

/* tree guides drawn behind the code column */
.bill { --c: linear-gradient(#ffc987, #ffc987); }
.bill .t0 { padding-left: 4px; background: var(--c) 11px 100% / 1px 50% no-repeat; }
.bill .t1 { padding-left: 16px; background: var(--c) 11px 0 / 1px 100% no-repeat, var(--c) 11px 50% / 6px 1px no-repeat, var(--c) 24px 100% / 1px 50% no-repeat; }
.bill .t2 { padding-left: 29px; background: var(--c) 11px 0 / 1px 100% no-repeat, var(--c) 24px 0 / 1px 50% no-repeat, var(--c) 24px 50% / 6px 1px no-repeat, var(--c) 36px 100% / 1px 50% no-repeat; }
.bill .t3 { padding-left: 41px; background: var(--c) 11px 0 / 1px 100% no-repeat, var(--c) 36px 0 / 1px 100% no-repeat, var(--c) 36px 50% / 6px 1px no-repeat, var(--c) 49px 100% / 1px 50% no-repeat; }
.bill .t4 { padding-left: 54px; background: var(--c) 11px 0 / 1px 100% no-repeat, var(--c) 36px 0 / 1px 100% no-repeat, var(--c) 49px 0 / 1px 100% no-repeat, var(--c) 49px 50% / 6px 1px no-repeat, var(--c) 61px 100% / 1px 50% no-repeat; }
.bill .t5 { padding-left: 87px; background: var(--c) 11px 0 / 1px 100% no-repeat, var(--c) 36px 0 / 1px 100% no-repeat, var(--c) 49px 0 / 1px 100% no-repeat, var(--c) 61px 0 / 1px 50% no-repeat, var(--c) 61px 50% / 21px 1px no-repeat; }
.bill .t6 { background: var(--c) 11px 0 / 1px 100% no-repeat, var(--c) 36px 0 / 1px 100% no-repeat, var(--c) 49px 0 / 1px 100% no-repeat, var(--c) 49px 50% / 21px 1px no-repeat; }
.bill .t7 { background: var(--c) 11px 0 / 1px 100% no-repeat, var(--c) 36px 0 / 1px 100% no-repeat, var(--c) 49px 0 / 1px 50% no-repeat, var(--c) 49px 50% / 21px 1px no-repeat; }

.mats td { background: #ffffe8; }
.mats td:nth-child(6) { text-align: center; }
.mats td:nth-child(n+7) { text-align: right; padding-right: 4px; }
.mats .sel td:first-child { background: #ffe6c8; font-weight: 700; border-right-color: #4498ff; }
.mats .sel td:nth-child(2) { border-right: 2px solid #808080; border-bottom: 2px solid #808080; }

.pane.bottom { display: flex; flex-direction: column; flex: none; height: 250px; border-bottom: 1px solid #d8d8d8; }
.dtabs { display: flex; gap: 2px; padding: 6px 0 0 9px; }
.dtabs button { height: 31px; padding: 0 19px; border-radius: 3px 3px 0 0; background: #bfbfbf; color: #333; }
.dtabs .on { background: #4498ff; color: #fff; font-weight: 500; }
.detail { display: grid; grid-template-columns: 1fr 18px; flex: 1; min-height: 0; border-top: 1px solid #c4c4c4; background: #fff; }
.detail .view { margin-bottom: 2px; }

.w27 { width: 27px; } .w52 { width: 52px; } .w53 { width: 53px; } .w54 { width: 54px; }
.w57 { width: 57px; } .w58 { width: 58px; } .w92 { width: 92px; } .w98 { width: 98px; }
.w100 { width: 100px; } .w101 { width: 101px; } .w102 { width: 102px; } .w106 { width: 106px; }
.w107 { width: 107px; } .w108 { width: 108px; } .w110 { width: 110px; } .w120 { width: 120px; }
.w151 { width: 151px; } .w157 { width: 157px; } .w159 { width: 159px; } .w201 { width: 201px; }
.w276 { width: 276px; }

/* status bar */
.status { display: flex; align-items: center; flex: none; height: 40px; white-space: nowrap; }
.status > span { padding: 0 34px 0 20px; border-right: 1px solid #9aa4ae; }
.status > span:first-child { padding-left: 12px; }
.score { width: 100px; height: 28px; margin-left: 33px; border-radius: 3px; background: #4498ff; color: #fff; }
.zoom { display: flex; align-items: center; margin-left: auto; padding-right: 7px; }
.vw { display: flex; align-items: center; justify-content: center; width: 28px; height: 28px; margin-right: 5px; }
.vw.on { background: #fff; border: 1px solid #ccc; border-radius: 3px; }
.zoom label { margin: 0 14px 0 13px; }
.zoom input { appearance: none; width: 132px; height: 16px; margin: 0 14px 0 13px; background: linear-gradient(#c8c8c8, #c8c8c8) center / 100% 2px no-repeat; }
.zoom input::-webkit-slider-thumb { appearance: none; width: 16px; height: 16px; border: 2px solid #777; border-radius: 50%; background: #fff; }

/* system taskbar */
.taskbar { display: flex; align-items: center; flex: none; height: 50px; color: #000; background: linear-gradient(90deg, #dcd9e1 0, #dddbe4 30%, #cbd3dc 39%, #d3d4d5 46%, #d6d5d6 56%, #d9d3da 70%, #d8d8e2 85%, #dadae0 100%); }
.sys, .apps { display: flex; height: 50px; }
.sys button { display: flex; align-items: center; justify-content: center; width: 60px; }
.split { width: 4px; height: 26px; margin: 0 13px 0 6px; border: 1px solid #222; border-width: 0 1px; }
.apps button { position: relative; display: flex; align-items: center; justify-content: center; width: 62px; }
.apps button::after { content: ""; position: absolute; left: 5px; right: 5px; bottom: 0; height: 3px; background: #0a78d8; }
.apps .on { background: #f2f2f4; }
.apps .on::after { left: 0; right: 0; }
.yu { width: 30px; height: 30px; border-radius: 5px; background: #4498ff; color: #fff; font-size: 22px; line-height: 28px; }
.power { display: flex; align-items: center; gap: 1px; margin-left: auto; }
.power span { padding: 0 2px; border: 2px solid #fff; outline: 1px solid #777; background: #159447; color: #fff; font-size: 14px; line-height: 18px; }
.tray { display: flex; align-items: center; gap: 11px; margin-left: 111px; padding-right: 6px; }
.temp { margin-right: 9px; font-size: 19px; }
.pen { margin-left: 4px; }
.ime { margin-left: 4px; font-size: 18px; }
.clock { display: flex; flex-direction: column; align-items: center; margin: 0 14px 0 2px; font-size: 16px; line-height: 22px; }
.chat { margin-left: 18px; margin-right: 24px; }
```
